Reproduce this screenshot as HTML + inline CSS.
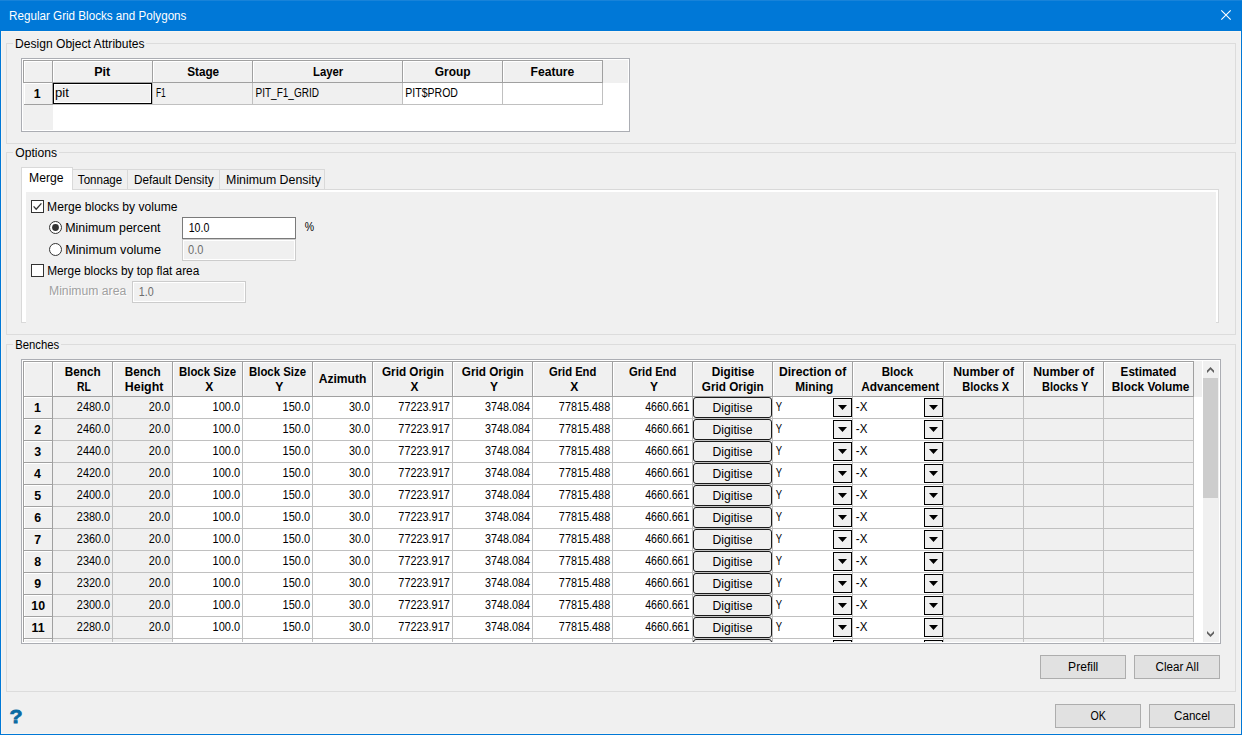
<!DOCTYPE html>
<html lang="en"><head><meta charset="utf-8"><title>Regular Grid Blocks and Polygons</title>
<style>
html,body{margin:0;padding:0}
body{width:1242px;height:735px;overflow:hidden;position:relative;background:#f0f0f0;font:12px/14px "Liberation Sans",sans-serif;color:#000}
div,span.t,svg{position:absolute;box-sizing:border-box}
.t{white-space:nowrap;line-height:14px;height:14px;transform-origin:0 0;display:block}
.gb{border:1px solid #dcdcdc}
.hc{background:#f0f0f0;border-right:1px solid #a0a0a0;border-bottom:1px solid #a0a0a0;box-shadow:inset 1px 1px 0 #fff}
.btn{background:#e1e1e1;border:1px solid #adadad}
.dg{background:#f0f0f0;border:1px solid #1c1c1c;border-radius:3px}
.dd{background:#f0f0f0;border:1px solid #000}
.gc{background:#f0f0f0}
</style></head><body>

<div style="left:0px;top:0px;width:1242px;height:31px;background:#0078d7"></div>
<div style="left:0px;top:0px;width:1242px;height:1px;background:#1883d9"></div>
<span class="t" style="left:9px;top:9px;transform:translateX(0.05px) scaleX(0.9705);color:#fff;">Regular Grid Blocks and Polygons</span>
<svg style="left:1216px;top:5px" width="20" height="20" viewBox="0 0 20 20"><path d="M5.3 5.3 L14.7 14.7 M14.7 5.3 L5.3 14.7" stroke="#fff" stroke-width="1.1" fill="none"/></svg>
<div style="left:0px;top:31px;width:1px;height:704px;background:#0078d7"></div>
<div style="left:1241px;top:31px;width:1px;height:704px;background:#0078d7"></div>
<div style="left:0px;top:734px;width:1242px;height:1px;background:#0078d7"></div>
<div style="left:1240px;top:31px;width:1px;height:703px;background:#f8f5f0"></div>
<div style="left:1px;top:733px;width:1240px;height:1px;background:#f8f5f0"></div>
<div style="left:1px;top:31px;width:1px;height:703px;background:#f8f5f0"></div>
<div style="left:1px;top:31px;width:1240px;height:1px;background:#f8f5f0"></div>
<div class="gb" style="left:6px;top:43px;width:1230px;height:101px;"></div>
<div style="left:13px;top:35px;width:133px;height:16px;background:#f0f0f0"></div>
<span class="t" style="left:15px;top:37px;transform:translateX(0.01px) scaleX(1.0069);">Design Object Attributes</span>
<div class="gb" style="left:6px;top:152px;width:1230px;height:183px;"></div>
<div style="left:13px;top:144px;width:46px;height:16px;background:#f0f0f0"></div>
<span class="t" style="left:15px;top:146px;transform:translateX(0.28px) scaleX(1.0107);">Options</span>
<div class="gb" style="left:6px;top:344px;width:1230px;height:348px;"></div>
<div style="left:13px;top:336px;width:48px;height:16px;background:#f0f0f0"></div>
<span class="t" style="left:15px;top:338px;transform:translateX(0.18px) scaleX(0.9428);">Benches</span>
<div style="left:21px;top:58px;width:609px;height:74px;border:1px solid #abadb3;background:#fff"></div>
<div style="left:23px;top:60px;width:605px;height:23px;background:#f0f0f0"></div>
<div style="left:23px;top:60px;width:580px;height:1px;background:#a0a0a0"></div>
<div style="left:23px;top:60px;width:1px;height:45px;background:#a0a0a0"></div>
<div style="left:23px;top:83px;width:30px;height:47px;background:#f0f0f0"></div>
<div class="hc" style="left:24px;top:61px;width:29px;height:22px;"></div>
<div class="hc" style="left:53px;top:61px;width:100px;height:22px;"></div>
<span class="t" style="left:94px;top:65px;transform:translateX(0.17px) scaleX(1.0424);font-weight:700;">Pit</span>
<div class="hc" style="left:153px;top:61px;width:100px;height:22px;"></div>
<span class="t" style="left:187px;top:65px;transform:translateX(0.14px) scaleX(0.9787);font-weight:700;">Stage</span>
<div class="hc" style="left:253px;top:61px;width:150px;height:22px;"></div>
<span class="t" style="left:313px;top:65px;transform:translateX(0.02px) scaleX(0.9423);font-weight:700;">Layer</span>
<div class="hc" style="left:403px;top:61px;width:100px;height:22px;"></div>
<span class="t" style="left:434px;top:65px;transform:translateX(0.71px) scaleX(0.9940);font-weight:700;">Group</span>
<div class="hc" style="left:503px;top:61px;width:100px;height:22px;"></div>
<span class="t" style="left:530px;top:65px;transform:translateX(0.49px) scaleX(1.0109);font-weight:700;">Feature</span>
<div class="hc" style="left:24px;top:83px;width:29px;height:22px;"></div>
<span class="t" style="left:33px;top:87px;transform:translateX(0.85px) scaleX(1.0300);font-weight:700;">1</span>
<div style="left:53px;top:83px;width:100px;height:22px;background:#f0f0f0;border-right:1px solid #c0c0c0;border-bottom:1px solid #c0c0c0"></div>
<div style="left:153px;top:83px;width:100px;height:22px;background:#f0f0f0;border-right:1px solid #c0c0c0;border-bottom:1px solid #c0c0c0"></div>
<div style="left:253px;top:83px;width:150px;height:22px;background:#f0f0f0;border-right:1px solid #c0c0c0;border-bottom:1px solid #c0c0c0"></div>
<div style="left:403px;top:83px;width:100px;height:22px;background:#fff;border-right:1px solid #c0c0c0;border-bottom:1px solid #c0c0c0"></div>
<div style="left:503px;top:83px;width:100px;height:22px;background:#fff;border-right:1px solid #c0c0c0;border-bottom:1px solid #c0c0c0"></div>
<div style="left:53px;top:83px;width:99px;height:21px;border:1px solid #000;box-shadow:inset 0 0 0 1px #fff"></div>
<span class="t" style="left:55px;top:86px;transform:translateX(0.06px) scaleX(1.0914);">pit</span>
<span class="t" style="left:155px;top:86px;transform:translateX(0.91px) scaleX(0.6994);">F1</span>
<span class="t" style="left:255px;top:86px;transform:translateX(0.48px) scaleX(0.8352);">PIT_F1_GRID</span>
<span class="t" style="left:405px;top:86px;transform:translateX(0.34px) scaleX(0.8757);">PIT$PROD</span>
<div style="left:21px;top:189px;width:1198px;height:134px;border:1px solid #d9d9d9;background:#fff"></div>
<div style="left:26px;top:192px;width:1190px;height:132px;background:#f0f0f0"></div>
<div style="left:72px;top:169px;width:56px;height:21px;border:1px solid #d9d9d9;background:#f0f0f0"></div>
<div style="left:127px;top:169px;width:93px;height:21px;border:1px solid #d9d9d9;background:#f0f0f0"></div>
<div style="left:219px;top:169px;width:106px;height:21px;border:1px solid #d9d9d9;background:#f0f0f0"></div>
<div style="left:21px;top:167px;width:52px;height:23px;border:1px solid #d9d9d9;border-bottom:none;background:#fff"></div>
<span class="t" style="left:29px;top:171px;transform:translateX(0.01px) scaleX(1.0120);">Merge</span>
<span class="t" style="left:77px;top:173px;transform:translateX(0.85px) scaleX(0.9633);">Tonnage</span>
<span class="t" style="left:134px;top:173px;transform:translateX(0.04px) scaleX(0.9767);">Default Density</span>
<span class="t" style="left:226px;top:173px;transform:translateX(0.09px) scaleX(1.0294);">Minimum Density</span>
<div style="left:31px;top:200px;width:13px;height:13px;border:1px solid #333;background:#fff"></div>
<svg style="left:31px;top:200px" width="13" height="13" viewBox="0 0 13 13"><path d="M2.6 6.4 L5.2 9.2 L10.4 3.4" stroke="#333" stroke-width="1.3" fill="none"/></svg>
<span class="t" style="left:47px;top:200px;transform:translateX(0.11px) scaleX(1.0072);">Merge blocks by volume</span>
<svg style="left:49px;top:221px" width="13" height="13" viewBox="0 0 13 13"><circle cx="6.5" cy="6.5" r="6" fill="#fff" stroke="#333" stroke-width="1"/><circle cx="6.5" cy="6.5" r="3.4" fill="#333"/></svg>
<span class="t" style="left:65px;top:221px;transform:translateX(0.19px) scaleX(1.0356);">Minimum percent</span>
<svg style="left:49px;top:243px" width="13" height="13" viewBox="0 0 13 13"><circle cx="6.5" cy="6.5" r="6" fill="#fff" stroke="#333" stroke-width="1"/></svg>
<span class="t" style="left:65px;top:243px;transform:translateX(0.16px) scaleX(1.0563);">Minimum volume</span>
<div style="left:182px;top:217px;width:114px;height:22px;border:1px solid #7a7a7a;background:#fff"></div>
<span class="t" style="left:188px;top:221px;transform:translateX(0.70px) scaleX(0.8826);">10.0</span>
<span class="t" style="left:304px;top:220px;transform:translateX(0.63px) scaleX(0.8749);">%</span>
<div style="left:182px;top:239px;width:114px;height:22px;border:1px solid #ccc;background:#f0f0f0;box-shadow:inset 0 0 0 1px #fff"></div>
<span class="t" style="left:188px;top:243px;transform:translateX(0.08px) scaleX(0.9201);color:#6d6d6d;">0.0</span>
<div style="left:31px;top:264px;width:13px;height:13px;border:1px solid #333;background:#fff"></div>
<span class="t" style="left:47px;top:264px;transform:translateX(0.13px) scaleX(0.9875);">Merge blocks by top flat area</span>
<span class="t" style="left:49px;top:284px;transform:translateX(0.00px) scaleX(1.0153);color:#a0a0a0;text-shadow:1px 1px 0 #fff;">Minimum area</span>
<div style="left:132px;top:281px;width:114px;height:22px;border:1px solid #ccc;background:#f0f0f0;box-shadow:inset 0 0 0 1px #fff"></div>
<span class="t" style="left:138px;top:285px;transform:translateX(0.69px) scaleX(0.8948);color:#6d6d6d;">1.0</span>
<div style="left:21px;top:359px;width:1200px;height:285px;border:1px solid #abadb3;background:#fff"></div>
<div style="left:23px;top:360px;width:1179px;height:282px;overflow:hidden">
<div style="left:0px;top:1px;width:1179px;height:36px;background:#f0f0f0"></div>
<div style="left:0px;top:1px;width:1171px;height:1px;background:#a0a0a0"></div>
<div style="left:0px;top:1px;width:1px;height:281px;background:#a0a0a0"></div>
<div style="left:1px;top:37px;width:29px;height:245px;background:#f0f0f0"></div>
<div class="hc" style="left:1px;top:2px;width:29px;height:35px;"></div>
<div class="hc" style="left:30px;top:2px;width:60px;height:35px;"></div>
<span class="t" style="left:41px;top:5px;transform:translateX(0.82px) scaleX(0.9792);font-weight:700;">Bench</span>
<span class="t" style="left:54px;top:20px;transform:translateX(0.08px) scaleX(0.8659);font-weight:700;">RL</span>
<div class="hc" style="left:90px;top:2px;width:60px;height:35px;"></div>
<span class="t" style="left:101px;top:5px;transform:translateX(0.82px) scaleX(0.9792);font-weight:700;">Bench</span>
<span class="t" style="left:101px;top:20px;transform:translateX(0.83px) scaleX(1.0308);font-weight:700;">Height</span>
<div class="hc" style="left:150px;top:2px;width:70px;height:35px;"></div>
<span class="t" style="left:155px;top:5px;transform:translateX(0.99px) scaleX(0.9504);font-weight:700;">Block Size</span>
<span class="t" style="left:182px;top:20px;transform:translateX(0.17px) scaleX(1.0064);font-weight:700;">X</span>
<div class="hc" style="left:220px;top:2px;width:70px;height:35px;"></div>
<span class="t" style="left:225px;top:5px;transform:translateX(0.99px) scaleX(0.9504);font-weight:700;">Block Size</span>
<span class="t" style="left:252px;top:20px;transform:translateX(0.15px) scaleX(1.0118);font-weight:700;">Y</span>
<div class="hc" style="left:290px;top:2px;width:60px;height:35px;"></div>
<span class="t" style="left:295px;top:12px;transform:translateX(0.71px) scaleX(1.0065);font-weight:700;">Azimuth</span>
<div class="hc" style="left:350px;top:2px;width:80px;height:35px;"></div>
<span class="t" style="left:358px;top:5px;transform:translateX(0.97px) scaleX(0.9775);font-weight:700;">Grid Origin</span>
<span class="t" style="left:387px;top:20px;transform:translateX(0.45px) scaleX(0.9872);font-weight:700;">X</span>
<div class="hc" style="left:430px;top:2px;width:80px;height:35px;"></div>
<span class="t" style="left:438px;top:5px;transform:translateX(0.87px) scaleX(0.9775);font-weight:700;">Grid Origin</span>
<span class="t" style="left:467px;top:20px;transform:translateX(0.00px) scaleX(0.9987);font-weight:700;">Y</span>
<div class="hc" style="left:510px;top:2px;width:80px;height:35px;"></div>
<span class="t" style="left:525px;top:5px;transform:translateX(0.94px) scaleX(0.9354);font-weight:700;">Grid End</span>
<span class="t" style="left:547px;top:20px;transform:translateX(0.17px) scaleX(1.0064);font-weight:700;">X</span>
<div class="hc" style="left:590px;top:2px;width:80px;height:35px;"></div>
<span class="t" style="left:605px;top:5px;transform:translateX(0.94px) scaleX(0.9354);font-weight:700;">Grid End</span>
<span class="t" style="left:627px;top:20px;transform:translateX(0.00px) scaleX(0.9987);font-weight:700;">Y</span>
<div class="hc" style="left:670px;top:2px;width:80px;height:35px;"></div>
<span class="t" style="left:688px;top:5px;transform:translateX(0.71px) scaleX(0.9848);font-weight:700;">Digitise</span>
<span class="t" style="left:678px;top:20px;transform:translateX(0.87px) scaleX(0.9775);font-weight:700;">Grid Origin</span>
<div class="hc" style="left:750px;top:2px;width:80px;height:35px;"></div>
<span class="t" style="left:755px;top:5px;transform:translateX(0.94px) scaleX(1.0093);font-weight:700;">Direction of</span>
<span class="t" style="left:772px;top:20px;transform:translateX(0.21px) scaleX(0.9852);font-weight:700;">Mining</span>
<div class="hc" style="left:830px;top:2px;width:91px;height:35px;"></div>
<span class="t" style="left:858px;top:5px;transform:translateX(0.73px) scaleX(0.9595);font-weight:700;">Block</span>
<span class="t" style="left:838px;top:20px;transform:translateX(0.21px) scaleX(0.9903);font-weight:700;">Advancement</span>
<div class="hc" style="left:921px;top:2px;width:80px;height:35px;"></div>
<span class="t" style="left:930px;top:5px;transform:translateX(0.19px) scaleX(1.0132);font-weight:700;">Number of</span>
<span class="t" style="left:939px;top:20px;transform:translateX(0.31px) scaleX(0.9219);font-weight:700;">Blocks X</span>
<div class="hc" style="left:1001px;top:2px;width:80px;height:35px;"></div>
<span class="t" style="left:1010px;top:5px;transform:translateX(0.19px) scaleX(1.0132);font-weight:700;">Number of</span>
<span class="t" style="left:1018px;top:20px;transform:translateX(0.97px) scaleX(0.9175);font-weight:700;">Blocks Y</span>
<div class="hc" style="left:1081px;top:2px;width:90px;height:35px;"></div>
<span class="t" style="left:1097px;top:5px;transform:translateX(0.62px) scaleX(0.9702);font-weight:700;">Estimated</span>
<span class="t" style="left:1088px;top:20px;transform:translateX(0.81px) scaleX(0.9876);font-weight:700;">Block Volume</span>
<div class="hc" style="left:1px;top:37px;width:29px;height:22px;"></div>
<span class="t" style="left:10px;top:41px;transform:translateX(0.95px) scaleX(1.0300);font-weight:700;">1</span>
<div style="left:30px;top:37px;width:60px;height:22px;background:#f0f0f0;border-right:1px solid #c0c0c0;border-bottom:1px solid #c0c0c0"></div>
<span class="t" style="left:53px;top:40px;transform:translateX(0.86px) scaleX(0.9063);">2480.0</span>
<div style="left:90px;top:37px;width:60px;height:22px;background:#f0f0f0;border-right:1px solid #c0c0c0;border-bottom:1px solid #c0c0c0"></div>
<span class="t" style="left:125px;top:40px;transform:translateX(0.85px) scaleX(0.9107);">20.0</span>
<div style="left:150px;top:37px;width:70px;height:22px;background:#fff;border-right:1px solid #c0c0c0;border-bottom:1px solid #c0c0c0"></div>
<span class="t" style="left:189px;top:40px;transform:translateX(0.56px) scaleX(0.9177);">100.0</span>
<div style="left:220px;top:37px;width:70px;height:22px;background:#fff;border-right:1px solid #c0c0c0;border-bottom:1px solid #c0c0c0"></div>
<span class="t" style="left:259px;top:40px;transform:translateX(0.56px) scaleX(0.9177);">150.0</span>
<div style="left:290px;top:37px;width:60px;height:22px;background:#fff;border-right:1px solid #c0c0c0;border-bottom:1px solid #c0c0c0"></div>
<span class="t" style="left:325px;top:40px;transform:translateX(0.99px) scaleX(0.9046);">30.0</span>
<div style="left:350px;top:37px;width:80px;height:22px;background:#fff;border-right:1px solid #c0c0c0;border-bottom:1px solid #c0c0c0"></div>
<span class="t" style="left:375px;top:40px;transform:translateX(0.35px) scaleX(0.9060);">77223.917</span>
<div style="left:430px;top:37px;width:80px;height:22px;background:#fff;border-right:1px solid #c0c0c0;border-bottom:1px solid #c0c0c0"></div>
<span class="t" style="left:461px;top:40px;transform:translateX(1.00px) scaleX(0.8993);">3748.084</span>
<div style="left:510px;top:37px;width:80px;height:22px;background:#fff;border-right:1px solid #c0c0c0;border-bottom:1px solid #c0c0c0"></div>
<span class="t" style="left:535px;top:40px;transform:translateX(0.85px) scaleX(0.9047);">77815.488</span>
<div style="left:590px;top:37px;width:80px;height:22px;background:#fff;border-right:1px solid #c0c0c0;border-bottom:1px solid #c0c0c0"></div>
<span class="t" style="left:622px;top:40px;transform:translateX(0.16px) scaleX(0.8841);">4660.661</span>
<div style="left:670px;top:37px;width:80px;height:22px;background:#fff;border-right:1px solid #c0c0c0;border-bottom:1px solid #c0c0c0"></div>
<div class="dg" style="left:670px;top:37px;width:79px;height:21px;"></div>
<span class="t" style="left:689px;top:41px;transform:translateX(0.51px) scaleX(1.0148);">Digitise</span>
<div style="left:750px;top:37px;width:80px;height:22px;background:#fff;border-right:1px solid #c0c0c0;border-bottom:1px solid #c0c0c0"></div>
<span class="t" style="left:752px;top:40px;transform:translateX(0.64px) scaleX(0.7888);">Y</span>
<div class="dd" style="left:810px;top:38px;width:19px;height:19px;"></div>
<svg style="left:815px;top:45px" width="9" height="5" viewBox="0 0 9 5"><path d="M0 0H9L4.5 5Z" fill="#000"/></svg>
<div style="left:830px;top:37px;width:91px;height:22px;background:#fff;border-right:1px solid #c0c0c0;border-bottom:1px solid #c0c0c0"></div>
<span class="t" style="left:832px;top:40px;transform:translateX(0.79px) scaleX(0.9617);">-X</span>
<div class="dd" style="left:901px;top:38px;width:19px;height:19px;"></div>
<svg style="left:906px;top:45px" width="9" height="5" viewBox="0 0 9 5"><path d="M0 0H9L4.5 5Z" fill="#000"/></svg>
<div style="left:921px;top:37px;width:80px;height:22px;background:#f0f0f0;border-right:1px solid #c0c0c0;border-bottom:1px solid #c0c0c0"></div>
<div style="left:1001px;top:37px;width:80px;height:22px;background:#f0f0f0;border-right:1px solid #c0c0c0;border-bottom:1px solid #c0c0c0"></div>
<div style="left:1081px;top:37px;width:90px;height:22px;background:#f0f0f0;border-right:1px solid #c0c0c0;border-bottom:1px solid #c0c0c0"></div>
<div class="hc" style="left:1px;top:59px;width:29px;height:22px;"></div>
<span class="t" style="left:11px;top:63px;transform:translateX(0.20px) scaleX(1.0300);font-weight:700;">2</span>
<div style="left:30px;top:59px;width:60px;height:22px;background:#f0f0f0;border-right:1px solid #c0c0c0;border-bottom:1px solid #c0c0c0"></div>
<span class="t" style="left:53px;top:62px;transform:translateX(0.86px) scaleX(0.9063);">2460.0</span>
<div style="left:90px;top:59px;width:60px;height:22px;background:#f0f0f0;border-right:1px solid #c0c0c0;border-bottom:1px solid #c0c0c0"></div>
<span class="t" style="left:125px;top:62px;transform:translateX(0.85px) scaleX(0.9107);">20.0</span>
<div style="left:150px;top:59px;width:70px;height:22px;background:#fff;border-right:1px solid #c0c0c0;border-bottom:1px solid #c0c0c0"></div>
<span class="t" style="left:189px;top:62px;transform:translateX(0.56px) scaleX(0.9177);">100.0</span>
<div style="left:220px;top:59px;width:70px;height:22px;background:#fff;border-right:1px solid #c0c0c0;border-bottom:1px solid #c0c0c0"></div>
<span class="t" style="left:259px;top:62px;transform:translateX(0.56px) scaleX(0.9177);">150.0</span>
<div style="left:290px;top:59px;width:60px;height:22px;background:#fff;border-right:1px solid #c0c0c0;border-bottom:1px solid #c0c0c0"></div>
<span class="t" style="left:325px;top:62px;transform:translateX(0.99px) scaleX(0.9046);">30.0</span>
<div style="left:350px;top:59px;width:80px;height:22px;background:#fff;border-right:1px solid #c0c0c0;border-bottom:1px solid #c0c0c0"></div>
<span class="t" style="left:375px;top:62px;transform:translateX(0.35px) scaleX(0.9060);">77223.917</span>
<div style="left:430px;top:59px;width:80px;height:22px;background:#fff;border-right:1px solid #c0c0c0;border-bottom:1px solid #c0c0c0"></div>
<span class="t" style="left:461px;top:62px;transform:translateX(1.00px) scaleX(0.8993);">3748.084</span>
<div style="left:510px;top:59px;width:80px;height:22px;background:#fff;border-right:1px solid #c0c0c0;border-bottom:1px solid #c0c0c0"></div>
<span class="t" style="left:535px;top:62px;transform:translateX(0.85px) scaleX(0.9047);">77815.488</span>
<div style="left:590px;top:59px;width:80px;height:22px;background:#fff;border-right:1px solid #c0c0c0;border-bottom:1px solid #c0c0c0"></div>
<span class="t" style="left:622px;top:62px;transform:translateX(0.16px) scaleX(0.8841);">4660.661</span>
<div style="left:670px;top:59px;width:80px;height:22px;background:#fff;border-right:1px solid #c0c0c0;border-bottom:1px solid #c0c0c0"></div>
<div class="dg" style="left:670px;top:59px;width:79px;height:21px;"></div>
<span class="t" style="left:689px;top:63px;transform:translateX(0.51px) scaleX(1.0148);">Digitise</span>
<div style="left:750px;top:59px;width:80px;height:22px;background:#fff;border-right:1px solid #c0c0c0;border-bottom:1px solid #c0c0c0"></div>
<span class="t" style="left:752px;top:62px;transform:translateX(0.64px) scaleX(0.7888);">Y</span>
<div class="dd" style="left:810px;top:60px;width:19px;height:19px;"></div>
<svg style="left:815px;top:67px" width="9" height="5" viewBox="0 0 9 5"><path d="M0 0H9L4.5 5Z" fill="#000"/></svg>
<div style="left:830px;top:59px;width:91px;height:22px;background:#fff;border-right:1px solid #c0c0c0;border-bottom:1px solid #c0c0c0"></div>
<span class="t" style="left:832px;top:62px;transform:translateX(0.79px) scaleX(0.9617);">-X</span>
<div class="dd" style="left:901px;top:60px;width:19px;height:19px;"></div>
<svg style="left:906px;top:67px" width="9" height="5" viewBox="0 0 9 5"><path d="M0 0H9L4.5 5Z" fill="#000"/></svg>
<div style="left:921px;top:59px;width:80px;height:22px;background:#f0f0f0;border-right:1px solid #c0c0c0;border-bottom:1px solid #c0c0c0"></div>
<div style="left:1001px;top:59px;width:80px;height:22px;background:#f0f0f0;border-right:1px solid #c0c0c0;border-bottom:1px solid #c0c0c0"></div>
<div style="left:1081px;top:59px;width:90px;height:22px;background:#f0f0f0;border-right:1px solid #c0c0c0;border-bottom:1px solid #c0c0c0"></div>
<div class="hc" style="left:1px;top:81px;width:29px;height:22px;"></div>
<span class="t" style="left:11px;top:85px;transform:translateX(0.24px) scaleX(1.0300);font-weight:700;">3</span>
<div style="left:30px;top:81px;width:60px;height:22px;background:#f0f0f0;border-right:1px solid #c0c0c0;border-bottom:1px solid #c0c0c0"></div>
<span class="t" style="left:53px;top:84px;transform:translateX(0.86px) scaleX(0.9063);">2440.0</span>
<div style="left:90px;top:81px;width:60px;height:22px;background:#f0f0f0;border-right:1px solid #c0c0c0;border-bottom:1px solid #c0c0c0"></div>
<span class="t" style="left:125px;top:84px;transform:translateX(0.85px) scaleX(0.9107);">20.0</span>
<div style="left:150px;top:81px;width:70px;height:22px;background:#fff;border-right:1px solid #c0c0c0;border-bottom:1px solid #c0c0c0"></div>
<span class="t" style="left:189px;top:84px;transform:translateX(0.56px) scaleX(0.9177);">100.0</span>
<div style="left:220px;top:81px;width:70px;height:22px;background:#fff;border-right:1px solid #c0c0c0;border-bottom:1px solid #c0c0c0"></div>
<span class="t" style="left:259px;top:84px;transform:translateX(0.56px) scaleX(0.9177);">150.0</span>
<div style="left:290px;top:81px;width:60px;height:22px;background:#fff;border-right:1px solid #c0c0c0;border-bottom:1px solid #c0c0c0"></div>
<span class="t" style="left:325px;top:84px;transform:translateX(0.99px) scaleX(0.9046);">30.0</span>
<div style="left:350px;top:81px;width:80px;height:22px;background:#fff;border-right:1px solid #c0c0c0;border-bottom:1px solid #c0c0c0"></div>
<span class="t" style="left:375px;top:84px;transform:translateX(0.35px) scaleX(0.9060);">77223.917</span>
<div style="left:430px;top:81px;width:80px;height:22px;background:#fff;border-right:1px solid #c0c0c0;border-bottom:1px solid #c0c0c0"></div>
<span class="t" style="left:461px;top:84px;transform:translateX(1.00px) scaleX(0.8993);">3748.084</span>
<div style="left:510px;top:81px;width:80px;height:22px;background:#fff;border-right:1px solid #c0c0c0;border-bottom:1px solid #c0c0c0"></div>
<span class="t" style="left:535px;top:84px;transform:translateX(0.85px) scaleX(0.9047);">77815.488</span>
<div style="left:590px;top:81px;width:80px;height:22px;background:#fff;border-right:1px solid #c0c0c0;border-bottom:1px solid #c0c0c0"></div>
<span class="t" style="left:622px;top:84px;transform:translateX(0.16px) scaleX(0.8841);">4660.661</span>
<div style="left:670px;top:81px;width:80px;height:22px;background:#fff;border-right:1px solid #c0c0c0;border-bottom:1px solid #c0c0c0"></div>
<div class="dg" style="left:670px;top:81px;width:79px;height:21px;"></div>
<span class="t" style="left:689px;top:85px;transform:translateX(0.51px) scaleX(1.0148);">Digitise</span>
<div style="left:750px;top:81px;width:80px;height:22px;background:#fff;border-right:1px solid #c0c0c0;border-bottom:1px solid #c0c0c0"></div>
<span class="t" style="left:752px;top:84px;transform:translateX(0.64px) scaleX(0.7888);">Y</span>
<div class="dd" style="left:810px;top:82px;width:19px;height:19px;"></div>
<svg style="left:815px;top:89px" width="9" height="5" viewBox="0 0 9 5"><path d="M0 0H9L4.5 5Z" fill="#000"/></svg>
<div style="left:830px;top:81px;width:91px;height:22px;background:#fff;border-right:1px solid #c0c0c0;border-bottom:1px solid #c0c0c0"></div>
<span class="t" style="left:832px;top:84px;transform:translateX(0.79px) scaleX(0.9617);">-X</span>
<div class="dd" style="left:901px;top:82px;width:19px;height:19px;"></div>
<svg style="left:906px;top:89px" width="9" height="5" viewBox="0 0 9 5"><path d="M0 0H9L4.5 5Z" fill="#000"/></svg>
<div style="left:921px;top:81px;width:80px;height:22px;background:#f0f0f0;border-right:1px solid #c0c0c0;border-bottom:1px solid #c0c0c0"></div>
<div style="left:1001px;top:81px;width:80px;height:22px;background:#f0f0f0;border-right:1px solid #c0c0c0;border-bottom:1px solid #c0c0c0"></div>
<div style="left:1081px;top:81px;width:90px;height:22px;background:#f0f0f0;border-right:1px solid #c0c0c0;border-bottom:1px solid #c0c0c0"></div>
<div class="hc" style="left:1px;top:103px;width:29px;height:22px;"></div>
<span class="t" style="left:11px;top:107px;transform:translateX(0.10px) scaleX(1.0300);font-weight:700;">4</span>
<div style="left:30px;top:103px;width:60px;height:22px;background:#f0f0f0;border-right:1px solid #c0c0c0;border-bottom:1px solid #c0c0c0"></div>
<span class="t" style="left:53px;top:106px;transform:translateX(0.86px) scaleX(0.9063);">2420.0</span>
<div style="left:90px;top:103px;width:60px;height:22px;background:#f0f0f0;border-right:1px solid #c0c0c0;border-bottom:1px solid #c0c0c0"></div>
<span class="t" style="left:125px;top:106px;transform:translateX(0.85px) scaleX(0.9107);">20.0</span>
<div style="left:150px;top:103px;width:70px;height:22px;background:#fff;border-right:1px solid #c0c0c0;border-bottom:1px solid #c0c0c0"></div>
<span class="t" style="left:189px;top:106px;transform:translateX(0.56px) scaleX(0.9177);">100.0</span>
<div style="left:220px;top:103px;width:70px;height:22px;background:#fff;border-right:1px solid #c0c0c0;border-bottom:1px solid #c0c0c0"></div>
<span class="t" style="left:259px;top:106px;transform:translateX(0.56px) scaleX(0.9177);">150.0</span>
<div style="left:290px;top:103px;width:60px;height:22px;background:#fff;border-right:1px solid #c0c0c0;border-bottom:1px solid #c0c0c0"></div>
<span class="t" style="left:325px;top:106px;transform:translateX(0.99px) scaleX(0.9046);">30.0</span>
<div style="left:350px;top:103px;width:80px;height:22px;background:#fff;border-right:1px solid #c0c0c0;border-bottom:1px solid #c0c0c0"></div>
<span class="t" style="left:375px;top:106px;transform:translateX(0.35px) scaleX(0.9060);">77223.917</span>
<div style="left:430px;top:103px;width:80px;height:22px;background:#fff;border-right:1px solid #c0c0c0;border-bottom:1px solid #c0c0c0"></div>
<span class="t" style="left:461px;top:106px;transform:translateX(1.00px) scaleX(0.8993);">3748.084</span>
<div style="left:510px;top:103px;width:80px;height:22px;background:#fff;border-right:1px solid #c0c0c0;border-bottom:1px solid #c0c0c0"></div>
<span class="t" style="left:535px;top:106px;transform:translateX(0.85px) scaleX(0.9047);">77815.488</span>
<div style="left:590px;top:103px;width:80px;height:22px;background:#fff;border-right:1px solid #c0c0c0;border-bottom:1px solid #c0c0c0"></div>
<span class="t" style="left:622px;top:106px;transform:translateX(0.16px) scaleX(0.8841);">4660.661</span>
<div style="left:670px;top:103px;width:80px;height:22px;background:#fff;border-right:1px solid #c0c0c0;border-bottom:1px solid #c0c0c0"></div>
<div class="dg" style="left:670px;top:103px;width:79px;height:21px;"></div>
<span class="t" style="left:689px;top:107px;transform:translateX(0.51px) scaleX(1.0148);">Digitise</span>
<div style="left:750px;top:103px;width:80px;height:22px;background:#fff;border-right:1px solid #c0c0c0;border-bottom:1px solid #c0c0c0"></div>
<span class="t" style="left:752px;top:106px;transform:translateX(0.64px) scaleX(0.7888);">Y</span>
<div class="dd" style="left:810px;top:104px;width:19px;height:19px;"></div>
<svg style="left:815px;top:111px" width="9" height="5" viewBox="0 0 9 5"><path d="M0 0H9L4.5 5Z" fill="#000"/></svg>
<div style="left:830px;top:103px;width:91px;height:22px;background:#fff;border-right:1px solid #c0c0c0;border-bottom:1px solid #c0c0c0"></div>
<span class="t" style="left:832px;top:106px;transform:translateX(0.79px) scaleX(0.9617);">-X</span>
<div class="dd" style="left:901px;top:104px;width:19px;height:19px;"></div>
<svg style="left:906px;top:111px" width="9" height="5" viewBox="0 0 9 5"><path d="M0 0H9L4.5 5Z" fill="#000"/></svg>
<div style="left:921px;top:103px;width:80px;height:22px;background:#f0f0f0;border-right:1px solid #c0c0c0;border-bottom:1px solid #c0c0c0"></div>
<div style="left:1001px;top:103px;width:80px;height:22px;background:#f0f0f0;border-right:1px solid #c0c0c0;border-bottom:1px solid #c0c0c0"></div>
<div style="left:1081px;top:103px;width:90px;height:22px;background:#f0f0f0;border-right:1px solid #c0c0c0;border-bottom:1px solid #c0c0c0"></div>
<div class="hc" style="left:1px;top:125px;width:29px;height:22px;"></div>
<span class="t" style="left:11px;top:129px;transform:translateX(0.15px) scaleX(1.0300);font-weight:700;">5</span>
<div style="left:30px;top:125px;width:60px;height:22px;background:#f0f0f0;border-right:1px solid #c0c0c0;border-bottom:1px solid #c0c0c0"></div>
<span class="t" style="left:53px;top:128px;transform:translateX(0.86px) scaleX(0.9063);">2400.0</span>
<div style="left:90px;top:125px;width:60px;height:22px;background:#f0f0f0;border-right:1px solid #c0c0c0;border-bottom:1px solid #c0c0c0"></div>
<span class="t" style="left:125px;top:128px;transform:translateX(0.85px) scaleX(0.9107);">20.0</span>
<div style="left:150px;top:125px;width:70px;height:22px;background:#fff;border-right:1px solid #c0c0c0;border-bottom:1px solid #c0c0c0"></div>
<span class="t" style="left:189px;top:128px;transform:translateX(0.56px) scaleX(0.9177);">100.0</span>
<div style="left:220px;top:125px;width:70px;height:22px;background:#fff;border-right:1px solid #c0c0c0;border-bottom:1px solid #c0c0c0"></div>
<span class="t" style="left:259px;top:128px;transform:translateX(0.56px) scaleX(0.9177);">150.0</span>
<div style="left:290px;top:125px;width:60px;height:22px;background:#fff;border-right:1px solid #c0c0c0;border-bottom:1px solid #c0c0c0"></div>
<span class="t" style="left:325px;top:128px;transform:translateX(0.99px) scaleX(0.9046);">30.0</span>
<div style="left:350px;top:125px;width:80px;height:22px;background:#fff;border-right:1px solid #c0c0c0;border-bottom:1px solid #c0c0c0"></div>
<span class="t" style="left:375px;top:128px;transform:translateX(0.35px) scaleX(0.9060);">77223.917</span>
<div style="left:430px;top:125px;width:80px;height:22px;background:#fff;border-right:1px solid #c0c0c0;border-bottom:1px solid #c0c0c0"></div>
<span class="t" style="left:461px;top:128px;transform:translateX(1.00px) scaleX(0.8993);">3748.084</span>
<div style="left:510px;top:125px;width:80px;height:22px;background:#fff;border-right:1px solid #c0c0c0;border-bottom:1px solid #c0c0c0"></div>
<span class="t" style="left:535px;top:128px;transform:translateX(0.85px) scaleX(0.9047);">77815.488</span>
<div style="left:590px;top:125px;width:80px;height:22px;background:#fff;border-right:1px solid #c0c0c0;border-bottom:1px solid #c0c0c0"></div>
<span class="t" style="left:622px;top:128px;transform:translateX(0.16px) scaleX(0.8841);">4660.661</span>
<div style="left:670px;top:125px;width:80px;height:22px;background:#fff;border-right:1px solid #c0c0c0;border-bottom:1px solid #c0c0c0"></div>
<div class="dg" style="left:670px;top:125px;width:79px;height:21px;"></div>
<span class="t" style="left:689px;top:129px;transform:translateX(0.51px) scaleX(1.0148);">Digitise</span>
<div style="left:750px;top:125px;width:80px;height:22px;background:#fff;border-right:1px solid #c0c0c0;border-bottom:1px solid #c0c0c0"></div>
<span class="t" style="left:752px;top:128px;transform:translateX(0.64px) scaleX(0.7888);">Y</span>
<div class="dd" style="left:810px;top:126px;width:19px;height:19px;"></div>
<svg style="left:815px;top:133px" width="9" height="5" viewBox="0 0 9 5"><path d="M0 0H9L4.5 5Z" fill="#000"/></svg>
<div style="left:830px;top:125px;width:91px;height:22px;background:#fff;border-right:1px solid #c0c0c0;border-bottom:1px solid #c0c0c0"></div>
<span class="t" style="left:832px;top:128px;transform:translateX(0.79px) scaleX(0.9617);">-X</span>
<div class="dd" style="left:901px;top:126px;width:19px;height:19px;"></div>
<svg style="left:906px;top:133px" width="9" height="5" viewBox="0 0 9 5"><path d="M0 0H9L4.5 5Z" fill="#000"/></svg>
<div style="left:921px;top:125px;width:80px;height:22px;background:#f0f0f0;border-right:1px solid #c0c0c0;border-bottom:1px solid #c0c0c0"></div>
<div style="left:1001px;top:125px;width:80px;height:22px;background:#f0f0f0;border-right:1px solid #c0c0c0;border-bottom:1px solid #c0c0c0"></div>
<div style="left:1081px;top:125px;width:90px;height:22px;background:#f0f0f0;border-right:1px solid #c0c0c0;border-bottom:1px solid #c0c0c0"></div>
<div class="hc" style="left:1px;top:147px;width:29px;height:22px;"></div>
<span class="t" style="left:11px;top:151px;transform:translateX(0.16px) scaleX(1.0300);font-weight:700;">6</span>
<div style="left:30px;top:147px;width:60px;height:22px;background:#f0f0f0;border-right:1px solid #c0c0c0;border-bottom:1px solid #c0c0c0"></div>
<span class="t" style="left:53px;top:150px;transform:translateX(0.86px) scaleX(0.9063);">2380.0</span>
<div style="left:90px;top:147px;width:60px;height:22px;background:#f0f0f0;border-right:1px solid #c0c0c0;border-bottom:1px solid #c0c0c0"></div>
<span class="t" style="left:125px;top:150px;transform:translateX(0.85px) scaleX(0.9107);">20.0</span>
<div style="left:150px;top:147px;width:70px;height:22px;background:#fff;border-right:1px solid #c0c0c0;border-bottom:1px solid #c0c0c0"></div>
<span class="t" style="left:189px;top:150px;transform:translateX(0.56px) scaleX(0.9177);">100.0</span>
<div style="left:220px;top:147px;width:70px;height:22px;background:#fff;border-right:1px solid #c0c0c0;border-bottom:1px solid #c0c0c0"></div>
<span class="t" style="left:259px;top:150px;transform:translateX(0.56px) scaleX(0.9177);">150.0</span>
<div style="left:290px;top:147px;width:60px;height:22px;background:#fff;border-right:1px solid #c0c0c0;border-bottom:1px solid #c0c0c0"></div>
<span class="t" style="left:325px;top:150px;transform:translateX(0.99px) scaleX(0.9046);">30.0</span>
<div style="left:350px;top:147px;width:80px;height:22px;background:#fff;border-right:1px solid #c0c0c0;border-bottom:1px solid #c0c0c0"></div>
<span class="t" style="left:375px;top:150px;transform:translateX(0.35px) scaleX(0.9060);">77223.917</span>
<div style="left:430px;top:147px;width:80px;height:22px;background:#fff;border-right:1px solid #c0c0c0;border-bottom:1px solid #c0c0c0"></div>
<span class="t" style="left:461px;top:150px;transform:translateX(1.00px) scaleX(0.8993);">3748.084</span>
<div style="left:510px;top:147px;width:80px;height:22px;background:#fff;border-right:1px solid #c0c0c0;border-bottom:1px solid #c0c0c0"></div>
<span class="t" style="left:535px;top:150px;transform:translateX(0.85px) scaleX(0.9047);">77815.488</span>
<div style="left:590px;top:147px;width:80px;height:22px;background:#fff;border-right:1px solid #c0c0c0;border-bottom:1px solid #c0c0c0"></div>
<span class="t" style="left:622px;top:150px;transform:translateX(0.16px) scaleX(0.8841);">4660.661</span>
<div style="left:670px;top:147px;width:80px;height:22px;background:#fff;border-right:1px solid #c0c0c0;border-bottom:1px solid #c0c0c0"></div>
<div class="dg" style="left:670px;top:147px;width:79px;height:21px;"></div>
<span class="t" style="left:689px;top:151px;transform:translateX(0.51px) scaleX(1.0148);">Digitise</span>
<div style="left:750px;top:147px;width:80px;height:22px;background:#fff;border-right:1px solid #c0c0c0;border-bottom:1px solid #c0c0c0"></div>
<span class="t" style="left:752px;top:150px;transform:translateX(0.64px) scaleX(0.7888);">Y</span>
<div class="dd" style="left:810px;top:148px;width:19px;height:19px;"></div>
<svg style="left:815px;top:155px" width="9" height="5" viewBox="0 0 9 5"><path d="M0 0H9L4.5 5Z" fill="#000"/></svg>
<div style="left:830px;top:147px;width:91px;height:22px;background:#fff;border-right:1px solid #c0c0c0;border-bottom:1px solid #c0c0c0"></div>
<span class="t" style="left:832px;top:150px;transform:translateX(0.79px) scaleX(0.9617);">-X</span>
<div class="dd" style="left:901px;top:148px;width:19px;height:19px;"></div>
<svg style="left:906px;top:155px" width="9" height="5" viewBox="0 0 9 5"><path d="M0 0H9L4.5 5Z" fill="#000"/></svg>
<div style="left:921px;top:147px;width:80px;height:22px;background:#f0f0f0;border-right:1px solid #c0c0c0;border-bottom:1px solid #c0c0c0"></div>
<div style="left:1001px;top:147px;width:80px;height:22px;background:#f0f0f0;border-right:1px solid #c0c0c0;border-bottom:1px solid #c0c0c0"></div>
<div style="left:1081px;top:147px;width:90px;height:22px;background:#f0f0f0;border-right:1px solid #c0c0c0;border-bottom:1px solid #c0c0c0"></div>
<div class="hc" style="left:1px;top:169px;width:29px;height:22px;"></div>
<span class="t" style="left:11px;top:173px;transform:translateX(0.17px) scaleX(1.0300);font-weight:700;">7</span>
<div style="left:30px;top:169px;width:60px;height:22px;background:#f0f0f0;border-right:1px solid #c0c0c0;border-bottom:1px solid #c0c0c0"></div>
<span class="t" style="left:53px;top:172px;transform:translateX(0.86px) scaleX(0.9063);">2360.0</span>
<div style="left:90px;top:169px;width:60px;height:22px;background:#f0f0f0;border-right:1px solid #c0c0c0;border-bottom:1px solid #c0c0c0"></div>
<span class="t" style="left:125px;top:172px;transform:translateX(0.85px) scaleX(0.9107);">20.0</span>
<div style="left:150px;top:169px;width:70px;height:22px;background:#fff;border-right:1px solid #c0c0c0;border-bottom:1px solid #c0c0c0"></div>
<span class="t" style="left:189px;top:172px;transform:translateX(0.56px) scaleX(0.9177);">100.0</span>
<div style="left:220px;top:169px;width:70px;height:22px;background:#fff;border-right:1px solid #c0c0c0;border-bottom:1px solid #c0c0c0"></div>
<span class="t" style="left:259px;top:172px;transform:translateX(0.56px) scaleX(0.9177);">150.0</span>
<div style="left:290px;top:169px;width:60px;height:22px;background:#fff;border-right:1px solid #c0c0c0;border-bottom:1px solid #c0c0c0"></div>
<span class="t" style="left:325px;top:172px;transform:translateX(0.99px) scaleX(0.9046);">30.0</span>
<div style="left:350px;top:169px;width:80px;height:22px;background:#fff;border-right:1px solid #c0c0c0;border-bottom:1px solid #c0c0c0"></div>
<span class="t" style="left:375px;top:172px;transform:translateX(0.35px) scaleX(0.9060);">77223.917</span>
<div style="left:430px;top:169px;width:80px;height:22px;background:#fff;border-right:1px solid #c0c0c0;border-bottom:1px solid #c0c0c0"></div>
<span class="t" style="left:461px;top:172px;transform:translateX(1.00px) scaleX(0.8993);">3748.084</span>
<div style="left:510px;top:169px;width:80px;height:22px;background:#fff;border-right:1px solid #c0c0c0;border-bottom:1px solid #c0c0c0"></div>
<span class="t" style="left:535px;top:172px;transform:translateX(0.85px) scaleX(0.9047);">77815.488</span>
<div style="left:590px;top:169px;width:80px;height:22px;background:#fff;border-right:1px solid #c0c0c0;border-bottom:1px solid #c0c0c0"></div>
<span class="t" style="left:622px;top:172px;transform:translateX(0.16px) scaleX(0.8841);">4660.661</span>
<div style="left:670px;top:169px;width:80px;height:22px;background:#fff;border-right:1px solid #c0c0c0;border-bottom:1px solid #c0c0c0"></div>
<div class="dg" style="left:670px;top:169px;width:79px;height:21px;"></div>
<span class="t" style="left:689px;top:173px;transform:translateX(0.51px) scaleX(1.0148);">Digitise</span>
<div style="left:750px;top:169px;width:80px;height:22px;background:#fff;border-right:1px solid #c0c0c0;border-bottom:1px solid #c0c0c0"></div>
<span class="t" style="left:752px;top:172px;transform:translateX(0.64px) scaleX(0.7888);">Y</span>
<div class="dd" style="left:810px;top:170px;width:19px;height:19px;"></div>
<svg style="left:815px;top:177px" width="9" height="5" viewBox="0 0 9 5"><path d="M0 0H9L4.5 5Z" fill="#000"/></svg>
<div style="left:830px;top:169px;width:91px;height:22px;background:#fff;border-right:1px solid #c0c0c0;border-bottom:1px solid #c0c0c0"></div>
<span class="t" style="left:832px;top:172px;transform:translateX(0.79px) scaleX(0.9617);">-X</span>
<div class="dd" style="left:901px;top:170px;width:19px;height:19px;"></div>
<svg style="left:906px;top:177px" width="9" height="5" viewBox="0 0 9 5"><path d="M0 0H9L4.5 5Z" fill="#000"/></svg>
<div style="left:921px;top:169px;width:80px;height:22px;background:#f0f0f0;border-right:1px solid #c0c0c0;border-bottom:1px solid #c0c0c0"></div>
<div style="left:1001px;top:169px;width:80px;height:22px;background:#f0f0f0;border-right:1px solid #c0c0c0;border-bottom:1px solid #c0c0c0"></div>
<div style="left:1081px;top:169px;width:90px;height:22px;background:#f0f0f0;border-right:1px solid #c0c0c0;border-bottom:1px solid #c0c0c0"></div>
<div class="hc" style="left:1px;top:191px;width:29px;height:22px;"></div>
<span class="t" style="left:11px;top:195px;transform:translateX(0.15px) scaleX(1.0300);font-weight:700;">8</span>
<div style="left:30px;top:191px;width:60px;height:22px;background:#f0f0f0;border-right:1px solid #c0c0c0;border-bottom:1px solid #c0c0c0"></div>
<span class="t" style="left:53px;top:194px;transform:translateX(0.86px) scaleX(0.9063);">2340.0</span>
<div style="left:90px;top:191px;width:60px;height:22px;background:#f0f0f0;border-right:1px solid #c0c0c0;border-bottom:1px solid #c0c0c0"></div>
<span class="t" style="left:125px;top:194px;transform:translateX(0.85px) scaleX(0.9107);">20.0</span>
<div style="left:150px;top:191px;width:70px;height:22px;background:#fff;border-right:1px solid #c0c0c0;border-bottom:1px solid #c0c0c0"></div>
<span class="t" style="left:189px;top:194px;transform:translateX(0.56px) scaleX(0.9177);">100.0</span>
<div style="left:220px;top:191px;width:70px;height:22px;background:#fff;border-right:1px solid #c0c0c0;border-bottom:1px solid #c0c0c0"></div>
<span class="t" style="left:259px;top:194px;transform:translateX(0.56px) scaleX(0.9177);">150.0</span>
<div style="left:290px;top:191px;width:60px;height:22px;background:#fff;border-right:1px solid #c0c0c0;border-bottom:1px solid #c0c0c0"></div>
<span class="t" style="left:325px;top:194px;transform:translateX(0.99px) scaleX(0.9046);">30.0</span>
<div style="left:350px;top:191px;width:80px;height:22px;background:#fff;border-right:1px solid #c0c0c0;border-bottom:1px solid #c0c0c0"></div>
<span class="t" style="left:375px;top:194px;transform:translateX(0.35px) scaleX(0.9060);">77223.917</span>
<div style="left:430px;top:191px;width:80px;height:22px;background:#fff;border-right:1px solid #c0c0c0;border-bottom:1px solid #c0c0c0"></div>
<span class="t" style="left:461px;top:194px;transform:translateX(1.00px) scaleX(0.8993);">3748.084</span>
<div style="left:510px;top:191px;width:80px;height:22px;background:#fff;border-right:1px solid #c0c0c0;border-bottom:1px solid #c0c0c0"></div>
<span class="t" style="left:535px;top:194px;transform:translateX(0.85px) scaleX(0.9047);">77815.488</span>
<div style="left:590px;top:191px;width:80px;height:22px;background:#fff;border-right:1px solid #c0c0c0;border-bottom:1px solid #c0c0c0"></div>
<span class="t" style="left:622px;top:194px;transform:translateX(0.16px) scaleX(0.8841);">4660.661</span>
<div style="left:670px;top:191px;width:80px;height:22px;background:#fff;border-right:1px solid #c0c0c0;border-bottom:1px solid #c0c0c0"></div>
<div class="dg" style="left:670px;top:191px;width:79px;height:21px;"></div>
<span class="t" style="left:689px;top:195px;transform:translateX(0.51px) scaleX(1.0148);">Digitise</span>
<div style="left:750px;top:191px;width:80px;height:22px;background:#fff;border-right:1px solid #c0c0c0;border-bottom:1px solid #c0c0c0"></div>
<span class="t" style="left:752px;top:194px;transform:translateX(0.64px) scaleX(0.7888);">Y</span>
<div class="dd" style="left:810px;top:192px;width:19px;height:19px;"></div>
<svg style="left:815px;top:199px" width="9" height="5" viewBox="0 0 9 5"><path d="M0 0H9L4.5 5Z" fill="#000"/></svg>
<div style="left:830px;top:191px;width:91px;height:22px;background:#fff;border-right:1px solid #c0c0c0;border-bottom:1px solid #c0c0c0"></div>
<span class="t" style="left:832px;top:194px;transform:translateX(0.79px) scaleX(0.9617);">-X</span>
<div class="dd" style="left:901px;top:192px;width:19px;height:19px;"></div>
<svg style="left:906px;top:199px" width="9" height="5" viewBox="0 0 9 5"><path d="M0 0H9L4.5 5Z" fill="#000"/></svg>
<div style="left:921px;top:191px;width:80px;height:22px;background:#f0f0f0;border-right:1px solid #c0c0c0;border-bottom:1px solid #c0c0c0"></div>
<div style="left:1001px;top:191px;width:80px;height:22px;background:#f0f0f0;border-right:1px solid #c0c0c0;border-bottom:1px solid #c0c0c0"></div>
<div style="left:1081px;top:191px;width:90px;height:22px;background:#f0f0f0;border-right:1px solid #c0c0c0;border-bottom:1px solid #c0c0c0"></div>
<div class="hc" style="left:1px;top:213px;width:29px;height:22px;"></div>
<span class="t" style="left:11px;top:217px;transform:translateX(0.18px) scaleX(1.0300);font-weight:700;">9</span>
<div style="left:30px;top:213px;width:60px;height:22px;background:#f0f0f0;border-right:1px solid #c0c0c0;border-bottom:1px solid #c0c0c0"></div>
<span class="t" style="left:53px;top:216px;transform:translateX(0.86px) scaleX(0.9063);">2320.0</span>
<div style="left:90px;top:213px;width:60px;height:22px;background:#f0f0f0;border-right:1px solid #c0c0c0;border-bottom:1px solid #c0c0c0"></div>
<span class="t" style="left:125px;top:216px;transform:translateX(0.85px) scaleX(0.9107);">20.0</span>
<div style="left:150px;top:213px;width:70px;height:22px;background:#fff;border-right:1px solid #c0c0c0;border-bottom:1px solid #c0c0c0"></div>
<span class="t" style="left:189px;top:216px;transform:translateX(0.56px) scaleX(0.9177);">100.0</span>
<div style="left:220px;top:213px;width:70px;height:22px;background:#fff;border-right:1px solid #c0c0c0;border-bottom:1px solid #c0c0c0"></div>
<span class="t" style="left:259px;top:216px;transform:translateX(0.56px) scaleX(0.9177);">150.0</span>
<div style="left:290px;top:213px;width:60px;height:22px;background:#fff;border-right:1px solid #c0c0c0;border-bottom:1px solid #c0c0c0"></div>
<span class="t" style="left:325px;top:216px;transform:translateX(0.99px) scaleX(0.9046);">30.0</span>
<div style="left:350px;top:213px;width:80px;height:22px;background:#fff;border-right:1px solid #c0c0c0;border-bottom:1px solid #c0c0c0"></div>
<span class="t" style="left:375px;top:216px;transform:translateX(0.35px) scaleX(0.9060);">77223.917</span>
<div style="left:430px;top:213px;width:80px;height:22px;background:#fff;border-right:1px solid #c0c0c0;border-bottom:1px solid #c0c0c0"></div>
<span class="t" style="left:461px;top:216px;transform:translateX(1.00px) scaleX(0.8993);">3748.084</span>
<div style="left:510px;top:213px;width:80px;height:22px;background:#fff;border-right:1px solid #c0c0c0;border-bottom:1px solid #c0c0c0"></div>
<span class="t" style="left:535px;top:216px;transform:translateX(0.85px) scaleX(0.9047);">77815.488</span>
<div style="left:590px;top:213px;width:80px;height:22px;background:#fff;border-right:1px solid #c0c0c0;border-bottom:1px solid #c0c0c0"></div>
<span class="t" style="left:622px;top:216px;transform:translateX(0.16px) scaleX(0.8841);">4660.661</span>
<div style="left:670px;top:213px;width:80px;height:22px;background:#fff;border-right:1px solid #c0c0c0;border-bottom:1px solid #c0c0c0"></div>
<div class="dg" style="left:670px;top:213px;width:79px;height:21px;"></div>
<span class="t" style="left:689px;top:217px;transform:translateX(0.51px) scaleX(1.0148);">Digitise</span>
<div style="left:750px;top:213px;width:80px;height:22px;background:#fff;border-right:1px solid #c0c0c0;border-bottom:1px solid #c0c0c0"></div>
<span class="t" style="left:752px;top:216px;transform:translateX(0.64px) scaleX(0.7888);">Y</span>
<div class="dd" style="left:810px;top:214px;width:19px;height:19px;"></div>
<svg style="left:815px;top:221px" width="9" height="5" viewBox="0 0 9 5"><path d="M0 0H9L4.5 5Z" fill="#000"/></svg>
<div style="left:830px;top:213px;width:91px;height:22px;background:#fff;border-right:1px solid #c0c0c0;border-bottom:1px solid #c0c0c0"></div>
<span class="t" style="left:832px;top:216px;transform:translateX(0.79px) scaleX(0.9617);">-X</span>
<div class="dd" style="left:901px;top:214px;width:19px;height:19px;"></div>
<svg style="left:906px;top:221px" width="9" height="5" viewBox="0 0 9 5"><path d="M0 0H9L4.5 5Z" fill="#000"/></svg>
<div style="left:921px;top:213px;width:80px;height:22px;background:#f0f0f0;border-right:1px solid #c0c0c0;border-bottom:1px solid #c0c0c0"></div>
<div style="left:1001px;top:213px;width:80px;height:22px;background:#f0f0f0;border-right:1px solid #c0c0c0;border-bottom:1px solid #c0c0c0"></div>
<div style="left:1081px;top:213px;width:90px;height:22px;background:#f0f0f0;border-right:1px solid #c0c0c0;border-bottom:1px solid #c0c0c0"></div>
<div class="hc" style="left:1px;top:235px;width:29px;height:22px;"></div>
<span class="t" style="left:8px;top:239px;transform:translateX(0.29px) scaleX(1.0300);font-weight:700;">10</span>
<div style="left:30px;top:235px;width:60px;height:22px;background:#f0f0f0;border-right:1px solid #c0c0c0;border-bottom:1px solid #c0c0c0"></div>
<span class="t" style="left:53px;top:238px;transform:translateX(0.86px) scaleX(0.9063);">2300.0</span>
<div style="left:90px;top:235px;width:60px;height:22px;background:#f0f0f0;border-right:1px solid #c0c0c0;border-bottom:1px solid #c0c0c0"></div>
<span class="t" style="left:125px;top:238px;transform:translateX(0.85px) scaleX(0.9107);">20.0</span>
<div style="left:150px;top:235px;width:70px;height:22px;background:#fff;border-right:1px solid #c0c0c0;border-bottom:1px solid #c0c0c0"></div>
<span class="t" style="left:189px;top:238px;transform:translateX(0.56px) scaleX(0.9177);">100.0</span>
<div style="left:220px;top:235px;width:70px;height:22px;background:#fff;border-right:1px solid #c0c0c0;border-bottom:1px solid #c0c0c0"></div>
<span class="t" style="left:259px;top:238px;transform:translateX(0.56px) scaleX(0.9177);">150.0</span>
<div style="left:290px;top:235px;width:60px;height:22px;background:#fff;border-right:1px solid #c0c0c0;border-bottom:1px solid #c0c0c0"></div>
<span class="t" style="left:325px;top:238px;transform:translateX(0.99px) scaleX(0.9046);">30.0</span>
<div style="left:350px;top:235px;width:80px;height:22px;background:#fff;border-right:1px solid #c0c0c0;border-bottom:1px solid #c0c0c0"></div>
<span class="t" style="left:375px;top:238px;transform:translateX(0.35px) scaleX(0.9060);">77223.917</span>
<div style="left:430px;top:235px;width:80px;height:22px;background:#fff;border-right:1px solid #c0c0c0;border-bottom:1px solid #c0c0c0"></div>
<span class="t" style="left:461px;top:238px;transform:translateX(1.00px) scaleX(0.8993);">3748.084</span>
<div style="left:510px;top:235px;width:80px;height:22px;background:#fff;border-right:1px solid #c0c0c0;border-bottom:1px solid #c0c0c0"></div>
<span class="t" style="left:535px;top:238px;transform:translateX(0.85px) scaleX(0.9047);">77815.488</span>
<div style="left:590px;top:235px;width:80px;height:22px;background:#fff;border-right:1px solid #c0c0c0;border-bottom:1px solid #c0c0c0"></div>
<span class="t" style="left:622px;top:238px;transform:translateX(0.16px) scaleX(0.8841);">4660.661</span>
<div style="left:670px;top:235px;width:80px;height:22px;background:#fff;border-right:1px solid #c0c0c0;border-bottom:1px solid #c0c0c0"></div>
<div class="dg" style="left:670px;top:235px;width:79px;height:21px;"></div>
<span class="t" style="left:689px;top:239px;transform:translateX(0.51px) scaleX(1.0148);">Digitise</span>
<div style="left:750px;top:235px;width:80px;height:22px;background:#fff;border-right:1px solid #c0c0c0;border-bottom:1px solid #c0c0c0"></div>
<span class="t" style="left:752px;top:238px;transform:translateX(0.64px) scaleX(0.7888);">Y</span>
<div class="dd" style="left:810px;top:236px;width:19px;height:19px;"></div>
<svg style="left:815px;top:243px" width="9" height="5" viewBox="0 0 9 5"><path d="M0 0H9L4.5 5Z" fill="#000"/></svg>
<div style="left:830px;top:235px;width:91px;height:22px;background:#fff;border-right:1px solid #c0c0c0;border-bottom:1px solid #c0c0c0"></div>
<span class="t" style="left:832px;top:238px;transform:translateX(0.79px) scaleX(0.9617);">-X</span>
<div class="dd" style="left:901px;top:236px;width:19px;height:19px;"></div>
<svg style="left:906px;top:243px" width="9" height="5" viewBox="0 0 9 5"><path d="M0 0H9L4.5 5Z" fill="#000"/></svg>
<div style="left:921px;top:235px;width:80px;height:22px;background:#f0f0f0;border-right:1px solid #c0c0c0;border-bottom:1px solid #c0c0c0"></div>
<div style="left:1001px;top:235px;width:80px;height:22px;background:#f0f0f0;border-right:1px solid #c0c0c0;border-bottom:1px solid #c0c0c0"></div>
<div style="left:1081px;top:235px;width:90px;height:22px;background:#f0f0f0;border-right:1px solid #c0c0c0;border-bottom:1px solid #c0c0c0"></div>
<div class="hc" style="left:1px;top:257px;width:29px;height:22px;"></div>
<span class="t" style="left:8px;top:261px;transform:translateX(0.55px) scaleX(1.0300);font-weight:700;">11</span>
<div style="left:30px;top:257px;width:60px;height:22px;background:#f0f0f0;border-right:1px solid #c0c0c0;border-bottom:1px solid #c0c0c0"></div>
<span class="t" style="left:53px;top:260px;transform:translateX(0.86px) scaleX(0.9063);">2280.0</span>
<div style="left:90px;top:257px;width:60px;height:22px;background:#f0f0f0;border-right:1px solid #c0c0c0;border-bottom:1px solid #c0c0c0"></div>
<span class="t" style="left:125px;top:260px;transform:translateX(0.85px) scaleX(0.9107);">20.0</span>
<div style="left:150px;top:257px;width:70px;height:22px;background:#fff;border-right:1px solid #c0c0c0;border-bottom:1px solid #c0c0c0"></div>
<span class="t" style="left:189px;top:260px;transform:translateX(0.56px) scaleX(0.9177);">100.0</span>
<div style="left:220px;top:257px;width:70px;height:22px;background:#fff;border-right:1px solid #c0c0c0;border-bottom:1px solid #c0c0c0"></div>
<span class="t" style="left:259px;top:260px;transform:translateX(0.56px) scaleX(0.9177);">150.0</span>
<div style="left:290px;top:257px;width:60px;height:22px;background:#fff;border-right:1px solid #c0c0c0;border-bottom:1px solid #c0c0c0"></div>
<span class="t" style="left:325px;top:260px;transform:translateX(0.99px) scaleX(0.9046);">30.0</span>
<div style="left:350px;top:257px;width:80px;height:22px;background:#fff;border-right:1px solid #c0c0c0;border-bottom:1px solid #c0c0c0"></div>
<span class="t" style="left:375px;top:260px;transform:translateX(0.35px) scaleX(0.9060);">77223.917</span>
<div style="left:430px;top:257px;width:80px;height:22px;background:#fff;border-right:1px solid #c0c0c0;border-bottom:1px solid #c0c0c0"></div>
<span class="t" style="left:461px;top:260px;transform:translateX(1.00px) scaleX(0.8993);">3748.084</span>
<div style="left:510px;top:257px;width:80px;height:22px;background:#fff;border-right:1px solid #c0c0c0;border-bottom:1px solid #c0c0c0"></div>
<span class="t" style="left:535px;top:260px;transform:translateX(0.85px) scaleX(0.9047);">77815.488</span>
<div style="left:590px;top:257px;width:80px;height:22px;background:#fff;border-right:1px solid #c0c0c0;border-bottom:1px solid #c0c0c0"></div>
<span class="t" style="left:622px;top:260px;transform:translateX(0.16px) scaleX(0.8841);">4660.661</span>
<div style="left:670px;top:257px;width:80px;height:22px;background:#fff;border-right:1px solid #c0c0c0;border-bottom:1px solid #c0c0c0"></div>
<div class="dg" style="left:670px;top:257px;width:79px;height:21px;"></div>
<span class="t" style="left:689px;top:261px;transform:translateX(0.51px) scaleX(1.0148);">Digitise</span>
<div style="left:750px;top:257px;width:80px;height:22px;background:#fff;border-right:1px solid #c0c0c0;border-bottom:1px solid #c0c0c0"></div>
<span class="t" style="left:752px;top:260px;transform:translateX(0.64px) scaleX(0.7888);">Y</span>
<div class="dd" style="left:810px;top:258px;width:19px;height:19px;"></div>
<svg style="left:815px;top:265px" width="9" height="5" viewBox="0 0 9 5"><path d="M0 0H9L4.5 5Z" fill="#000"/></svg>
<div style="left:830px;top:257px;width:91px;height:22px;background:#fff;border-right:1px solid #c0c0c0;border-bottom:1px solid #c0c0c0"></div>
<span class="t" style="left:832px;top:260px;transform:translateX(0.79px) scaleX(0.9617);">-X</span>
<div class="dd" style="left:901px;top:258px;width:19px;height:19px;"></div>
<svg style="left:906px;top:265px" width="9" height="5" viewBox="0 0 9 5"><path d="M0 0H9L4.5 5Z" fill="#000"/></svg>
<div style="left:921px;top:257px;width:80px;height:22px;background:#f0f0f0;border-right:1px solid #c0c0c0;border-bottom:1px solid #c0c0c0"></div>
<div style="left:1001px;top:257px;width:80px;height:22px;background:#f0f0f0;border-right:1px solid #c0c0c0;border-bottom:1px solid #c0c0c0"></div>
<div style="left:1081px;top:257px;width:90px;height:22px;background:#f0f0f0;border-right:1px solid #c0c0c0;border-bottom:1px solid #c0c0c0"></div>
<div class="hc" style="left:1px;top:279px;width:29px;height:22px;"></div>
<span class="t" style="left:8px;top:283px;transform:translateX(0.29px) scaleX(1.0300);font-weight:700;">12</span>
<div style="left:30px;top:279px;width:60px;height:22px;background:#f0f0f0;border-right:1px solid #c0c0c0;border-bottom:1px solid #c0c0c0"></div>
<span class="t" style="left:53px;top:282px;transform:translateX(0.86px) scaleX(0.9063);">2260.0</span>
<div style="left:90px;top:279px;width:60px;height:22px;background:#f0f0f0;border-right:1px solid #c0c0c0;border-bottom:1px solid #c0c0c0"></div>
<span class="t" style="left:125px;top:282px;transform:translateX(0.85px) scaleX(0.9107);">20.0</span>
<div style="left:150px;top:279px;width:70px;height:22px;background:#fff;border-right:1px solid #c0c0c0;border-bottom:1px solid #c0c0c0"></div>
<span class="t" style="left:189px;top:282px;transform:translateX(0.56px) scaleX(0.9177);">100.0</span>
<div style="left:220px;top:279px;width:70px;height:22px;background:#fff;border-right:1px solid #c0c0c0;border-bottom:1px solid #c0c0c0"></div>
<span class="t" style="left:259px;top:282px;transform:translateX(0.56px) scaleX(0.9177);">150.0</span>
<div style="left:290px;top:279px;width:60px;height:22px;background:#fff;border-right:1px solid #c0c0c0;border-bottom:1px solid #c0c0c0"></div>
<span class="t" style="left:325px;top:282px;transform:translateX(0.99px) scaleX(0.9046);">30.0</span>
<div style="left:350px;top:279px;width:80px;height:22px;background:#fff;border-right:1px solid #c0c0c0;border-bottom:1px solid #c0c0c0"></div>
<span class="t" style="left:375px;top:282px;transform:translateX(0.35px) scaleX(0.9060);">77223.917</span>
<div style="left:430px;top:279px;width:80px;height:22px;background:#fff;border-right:1px solid #c0c0c0;border-bottom:1px solid #c0c0c0"></div>
<span class="t" style="left:461px;top:282px;transform:translateX(1.00px) scaleX(0.8993);">3748.084</span>
<div style="left:510px;top:279px;width:80px;height:22px;background:#fff;border-right:1px solid #c0c0c0;border-bottom:1px solid #c0c0c0"></div>
<span class="t" style="left:535px;top:282px;transform:translateX(0.85px) scaleX(0.9047);">77815.488</span>
<div style="left:590px;top:279px;width:80px;height:22px;background:#fff;border-right:1px solid #c0c0c0;border-bottom:1px solid #c0c0c0"></div>
<span class="t" style="left:622px;top:282px;transform:translateX(0.16px) scaleX(0.8841);">4660.661</span>
<div style="left:670px;top:279px;width:80px;height:22px;background:#fff;border-right:1px solid #c0c0c0;border-bottom:1px solid #c0c0c0"></div>
<div class="dg" style="left:670px;top:279px;width:79px;height:21px;"></div>
<span class="t" style="left:689px;top:283px;transform:translateX(0.51px) scaleX(1.0148);">Digitise</span>
<div style="left:750px;top:279px;width:80px;height:22px;background:#fff;border-right:1px solid #c0c0c0;border-bottom:1px solid #c0c0c0"></div>
<span class="t" style="left:752px;top:282px;transform:translateX(0.64px) scaleX(0.7888);">Y</span>
<div class="dd" style="left:810px;top:280px;width:19px;height:19px;"></div>
<svg style="left:815px;top:287px" width="9" height="5" viewBox="0 0 9 5"><path d="M0 0H9L4.5 5Z" fill="#000"/></svg>
<div style="left:830px;top:279px;width:91px;height:22px;background:#fff;border-right:1px solid #c0c0c0;border-bottom:1px solid #c0c0c0"></div>
<span class="t" style="left:832px;top:282px;transform:translateX(0.79px) scaleX(0.9617);">-X</span>
<div class="dd" style="left:901px;top:280px;width:19px;height:19px;"></div>
<svg style="left:906px;top:287px" width="9" height="5" viewBox="0 0 9 5"><path d="M0 0H9L4.5 5Z" fill="#000"/></svg>
<div style="left:921px;top:279px;width:80px;height:22px;background:#f0f0f0;border-right:1px solid #c0c0c0;border-bottom:1px solid #c0c0c0"></div>
<div style="left:1001px;top:279px;width:80px;height:22px;background:#f0f0f0;border-right:1px solid #c0c0c0;border-bottom:1px solid #c0c0c0"></div>
<div style="left:1081px;top:279px;width:90px;height:22px;background:#f0f0f0;border-right:1px solid #c0c0c0;border-bottom:1px solid #c0c0c0"></div>
</div>
<div style="left:1203px;top:361px;width:16px;height:281px;background:#f0f0f0"></div>
<div style="left:1203px;top:378px;width:15px;height:120px;background:#cdcdcd"></div>
<svg style="left:1205px;top:364px" width="11" height="11" viewBox="0 0 11 11"><path d="M2 6.5L5.5 3L9 6.5V9L5.5 5.5L2 9Z" fill="#606060"/></svg>
<svg style="left:1205px;top:628px" width="11" height="11" viewBox="0 0 11 11"><path d="M2 3L5.5 6.5L9 3V5.5L5.5 9L2 5.5Z" fill="#606060"/></svg>
<div class="btn" style="left:1040px;top:655px;width:86px;height:24px;"></div>
<span class="t" style="left:1068px;top:660px;transform:translateX(0.11px) scaleX(1.0060);">Prefill</span>
<div class="btn" style="left:1134px;top:655px;width:86px;height:24px;"></div>
<span class="t" style="left:1155px;top:660px;transform:translateX(0.52px) scaleX(0.9679);">Clear All</span>
<div class="btn" style="left:1055px;top:704px;width:86px;height:24px;"></div>
<span class="t" style="left:1090px;top:709px;transform:translateX(0.51px) scaleX(0.8834);">OK</span>
<div class="btn" style="left:1149px;top:704px;width:86px;height:24px;"></div>
<span class="t" style="left:1174px;top:709px;transform:translateX(0.12px) scaleX(0.9650);">Cancel</span>
<span class="t" style="left:8.5px;top:704px;font-size:19px;line-height:24px;height:24px;font-weight:700;color:#0b6aa2;-webkit-text-stroke:0.8px #0b6aa2;transform:translate(0.6px,0.9px) scaleX(1.12)">?</span>
</body></html>
